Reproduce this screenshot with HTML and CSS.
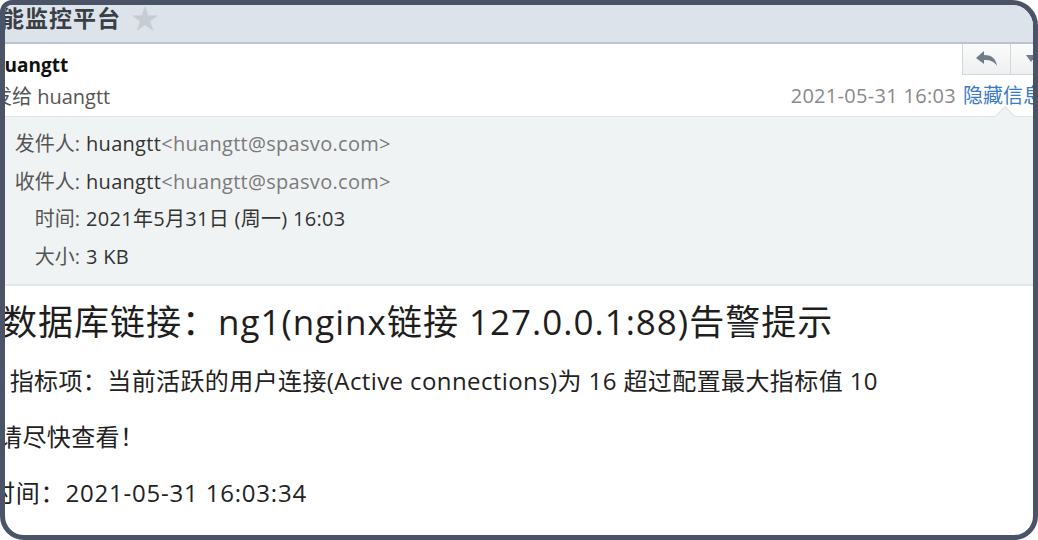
FILE: index.html
```html
<!doctype html>
<html>
  <head>
    <meta charset="utf-8">
    <title>智能监控平台</title>
    <link rel="stylesheet" href="styles.css">
  </head>
  <body>
    <div id="frame">
      <header class="titlebar">
        <h1 class="subject">智能监控平台</h1>
        <span class="star">&#9733;</span>
      </header>

      <section class="head">
        <div class="head-left">
          <div class="sender">huangtt</div>
          <div class="recipient">发给 huangtt</div>
        </div>
        <div class="head-right">
          <div class="btns">
            <span class="btn btn-reply">
              <svg width="22" height="16" viewBox="0 0 22 16"><path d="M0 7 L8 0 L8 4 C15 4 20 7 21 15 C18 10 14 9 8 9 L8 13 Z" fill="#6f7d89"/></svg>
            </span>
            <span class="btn btn-more">
              <svg width="10" height="8" viewBox="0 0 10 8"><path d="M0 0 L10 0 L5 7 Z" fill="#6f7d89"/></svg>
            </span>
          </div>
          <div class="meta">
            <span class="date">2021-05-31 16:03</span>
            <a class="toggle">隐藏信息</a>
          </div>
        </div>
      </section>

      <section class="details">
        <span class="notch"></span>
        <div class="rows">
          <span class="label">发件人:</span>
          <span class="value"><b>huangtt</b><i>&lt;huangtt@spasvo.com&gt;</i></span>
          <span class="label">收件人:</span>
          <span class="value"><b>huangtt</b><i>&lt;huangtt@spasvo.com&gt;</i></span>
          <span class="label">时间:</span>
          <span class="value"><b>2021年5月31日 (周一) 16:03</b></span>
          <span class="label">大小:</span>
          <span class="value"><b>3 KB</b></span>
        </div>
      </section>

      <section class="content">
        <h2 class="alert-title">数据库链接：ng1(nginx链接 127.0.0.1:88)告警提示</h2>
        <p class="line line-metric">&nbsp;指标项：当前活跃的用户连接(Active connections)为 16 超过配置最大指标值 10</p>
        <p class="line line-hint">请尽快查看！</p>
        <p class="line line-time">时间：2021-05-31 16:03:34</p>
      </section>
    </div>
  </body>
</html>
```

FILE: styles.css
```css
*, *:before, *:after {
  margin: 0;
  padding: 0;
  box-sizing: border-box;
}

html, body {
  width: 100%;
  height: 100%;
  background-color: #fff;
}

body {
  font-family: "Open Sans", "Noto Sans CJK SC", sans-serif;
  color: #222;
}

#frame {
  width: 1038px;
  height: 540px;
  border: 5px solid #4b5466;
  border-radius: 12px 26px 24px 24px;
  overflow: hidden;
  background-color: #fff;
}

/* subject bar */
.titlebar {
  height: 39px;
  display: flex;
  align-items: flex-start;
  background-color: #dde3ea;
  border-bottom: 2px solid #bcc3cb;
}

.subject {
  margin-left: -28px;
  font-size: 23px;
  font-weight: bold;
  line-height: 26px;
  letter-spacing: 1px;
  color: #3a3f46;
}

.star {
  margin-left: 10px;
  font-size: 28px;
  line-height: 26px;
  color: #c7ccd3;
}

/* sender block */
.head {
  display: flex;
  justify-content: space-between;
  height: 72px;
}

.head-left {
  margin-left: -13px;
  padding-top: 9px;
}

.sender {
  font-size: 19px;
  font-weight: bold;
  color: #111;
  line-height: 24px;
}

.recipient {
  margin-top: 8px;
  font-size: 20px;
  color: #555;
  line-height: 24px;
}

.head-right {
  margin-right: -10px;
  display: flex;
  flex-direction: column;
  align-items: flex-end;
}

.btns {
  display: flex;
  margin-right: -8px;
}

.btn {
  display: flex;
  align-items: center;
  justify-content: center;
  height: 31px;
  background: linear-gradient(#fafbfb, #eef0f1);
  border: 1px solid #d3d7da;
  border-top: 0;
}

.btn-reply {
  width: 49px;
}

.btn-more {
  width: 40px;
  border-left: 0;
}

.meta {
  margin-top: 9px;
  display: flex;
  gap: 7px;
  font-size: 20px;
  line-height: 24px;
  white-space: nowrap;
}

.date {
  color: #8a8a8a;
  letter-spacing: 0.3px;
}

.toggle {
  color: #3b7bc4;
}

/* detail panel */
.details {
  position: relative;
  height: 170px;
  padding: 8px 0 0 3px;
  background-color: #f0f3f3;
  border-top: 1px solid #dfe4e4;
  border-bottom: 2px solid #e3e7e7;
}

.notch {
  position: absolute;
  top: -8px;
  left: 993px;
  width: 14px;
  height: 14px;
  background-color: #f0f3f3;
  border-top: 1px solid #dfe4e4;
  border-left: 1px solid #dfe4e4;
  transform: rotate(45deg);
}

.rows {
  display: grid;
  grid-template-columns: 72px auto;
  font-size: 20px;
  line-height: 37.7px;
}

.label {
  text-align: right;
  color: #555;
}

.value {
  padding-left: 6px;
  letter-spacing: 0.3px;
}

.value b {
  font-weight: normal;
  color: #333;
}

.value i {
  font-style: normal;
  color: #7b7b7b;
}

/* message body */
.content {
  padding-top: 10px;
}

.alert-title {
  margin-left: -3px;
  font-size: 35px;
  font-weight: normal;
  line-height: 52px;
  letter-spacing: 1px;
  color: #1e1e1e;
  white-space: nowrap;
}

.line {
  font-size: 24px;
  line-height: 56px;
  letter-spacing: 0.4px;
  color: #222;
  white-space: nowrap;
}

.line-metric {
  margin-left: -2px;
  margin-top: 5px;
}

.line-hint {
  margin-left: -7px;
}

.line-time {
  margin-left: -14px;
  letter-spacing: 0.8px;
}
```
